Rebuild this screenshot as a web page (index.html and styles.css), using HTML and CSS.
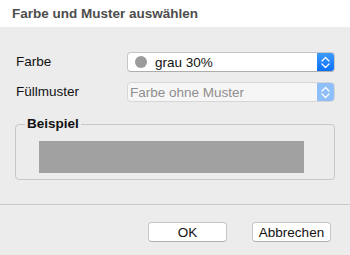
FILE: index.html
```html
<!DOCTYPE html>
<html lang="de">
<head>
  <meta charset="UTF-8" />
  <title>Farbe und Muster auswählen</title>
  <link rel="stylesheet" href="styles.css">
</head>
<body>
  <div class="dialog">
    <div class="dialog-title">Farbe und Muster auswählen</div>

    <div class="form">
      <label class="form-label">Farbe</label>
      <div class="popup">
        <span class="popup-value"><span class="swatch-dot"></span>grau 30%</span>
        <span class="stepper">
          <svg width="9" height="13" viewBox="0 0 9 13"><path d="M1 5 L4.5 1.5 L8 5 M1 8 L4.5 11.5 L8 8" fill="none" stroke="#fff" stroke-width="1.3" stroke-linecap="round" stroke-linejoin="round"/></svg>
        </span>
      </div>

      <label class="form-label">Füllmuster</label>
      <div class="popup disabled">
        <span class="popup-value">Farbe ohne Muster</span>
        <span class="stepper">
          <svg width="9" height="13" viewBox="0 0 9 13"><path d="M1 5 L4.5 1.5 L8 5 M1 8 L4.5 11.5 L8 8" fill="none" stroke="#fff" stroke-width="1.3" stroke-linecap="round" stroke-linejoin="round"/></svg>
        </span>
      </div>
    </div>

    <fieldset class="preview">
      <legend>Beispiel</legend>
      <div class="preview-fill"></div>
    </fieldset>

    <div class="footer">
      <button class="btn">OK</button>
      <button class="btn">Abbrechen</button>
    </div>
  </div>
</body>
</html>
```

FILE: styles.css
```css
*, *::before, *::after { box-sizing: border-box; }

body {
  margin: 0;
  font-family: 'Liberation Sans', Arial, sans-serif;
  font-size: 13.5px;
  color: #111;
  background: #ececec;
}

.dialog {
  width: 350px;
  height: 255px;
  background: #ececec;
}

.dialog-title {
  height: 27px;
  line-height: 27px;
  padding-left: 12px;
  background: #fff;
  font-weight: bold;
  color: #4d4d4d;
}

.form {
  display: grid;
  grid-template-columns: 111px 208px;
  grid-auto-rows: 20px;
  row-gap: 10px;
  margin: 25px 0 0 16px;
}

.form-label {
  line-height: 20px;
  color: #111;
}

.popup {
  display: flex;
  align-items: center;
  background: #fff;
  border: 1px solid #c6c6c6;
  border-bottom-color: #adadad;
  border-radius: 4px;
  overflow: hidden;
}

.popup-value {
  flex: 1;
  display: flex;
  align-items: center;
  padding-left: 7px;
}

.swatch-dot {
  width: 12px;
  height: 12px;
  border-radius: 50%;
  background: #9b9b9b;
  margin-right: 8px;
}

.stepper {
  width: 17px;
  height: 100%;
  display: flex;
  align-items: center;
  justify-content: center;
  background: linear-gradient(#3d9bfd, #0b6ffb);
}

.popup.disabled {
  background: #f6f6f6;
  border-color: #d6d6d6;
}

.popup.disabled .popup-value {
  color: #8e8e8e;
  padding-left: 2px;
}

.popup.disabled .stepper {
  background: #8fbffb;
}

.preview {
  margin: 14px 15px 0 15px;
  padding: 0 30px 6px 9px;
  border: 1px solid #c7c7c7;
  border-radius: 4px;
}

.preview legend {
  padding: 0 2px;
  line-height: 16px;
  font-weight: bold;
  color: #111;
}

.preview-fill {
  height: 32px;
  margin: 9px 0 0 14px;
  background: #a1a1a1;
}

.footer {
  display: flex;
  justify-content: flex-end;
  gap: 25px;
  margin-top: 24px;
  padding: 17px 19px 0 0;
  border-top: 1px solid #c9c9c9;
}

.btn {
  width: 79px;
  height: 20px;
  padding: 0;
  font-family: inherit;
  font-size: 13.5px;
  color: #111;
  background: #fff;
  border: 1px solid #c6c6c6;
  border-bottom-color: #b0b0b0;
  border-radius: 4px;
}
```
